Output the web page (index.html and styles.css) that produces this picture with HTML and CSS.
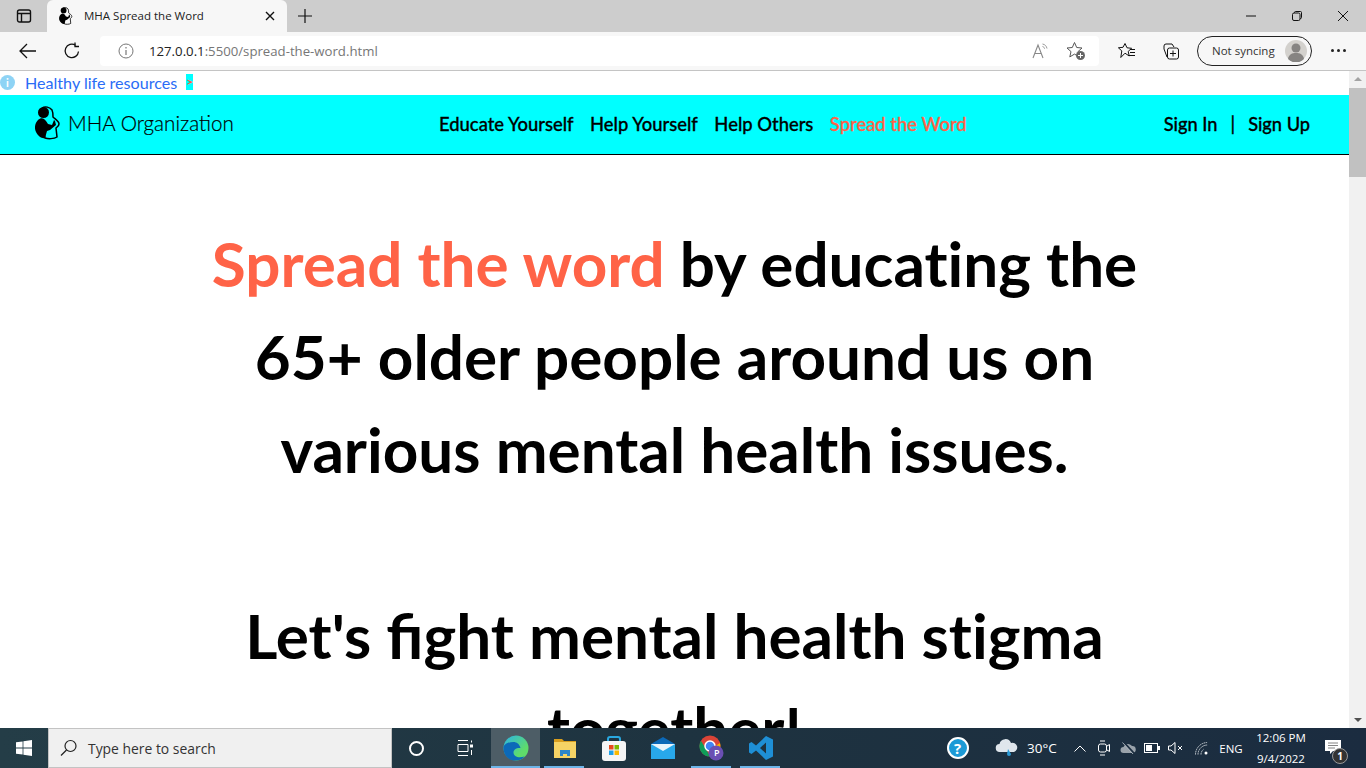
FILE: index.html
```html
<!DOCTYPE html>
<html lang="en">

<head>
    <meta charset="UTF-8">
    <title>MHA Spread the Word</title>
    <link rel="stylesheet" href="styles.css">
</head>

<body>
    <svg class="defs" width="0" height="0">
        <symbol id="hug" viewBox="0 0 26 34">
            <path d="M7 2c3-2 8-1 10 2 1 2 1 4 1 7 2 2 6 4 6 7 0 2-2 3-3 4l1 9c-3 2-9 2-12 1l-1-6" fill="none" stroke="#000" stroke-width="1.500" />
            <circle cx="8.500" cy="6.500" r="5.500" fill="#000" />
            <path d="M3 14c3-3 6-2 8 1l2 3 4 1 2-5 1 1 1 4-6 5-3 1-2 7c-3 1-7-2-9-6-2-4-1-9 2-12z" fill="#000" />
        </symbol>
    </svg>

    <!-- browser frame -->
    <div class="tabstrip">
        <svg class="sidebar-ico" width="16" height="16" viewBox="0 0 16 16"><rect x="1.500" y="2" width="13" height="12" rx="2" fill="none" stroke="#111" stroke-width="1.400" /><path d="M1.500 5.500h13M5.500 5.500V14" stroke="#111" stroke-width="1.400" /></svg>
        <div class="tab">
            <svg class="tab-fav" width="14" height="18"><use href="#hug" /></svg>
            <span class="tab-title">MHA Spread the Word</span>
            <svg class="tab-close" width="10" height="10" viewBox="0 0 10 10"><path d="M1 1l8 8M9 1l-8 8" stroke="#111" stroke-width="1.400" /></svg>
        </div>
        <svg class="new-tab" width="14" height="14" viewBox="0 0 14 14"><path d="M7 0v14M0 7h14" stroke="#111" stroke-width="1.200" /></svg>
        <div class="win-btns">
            <svg width="12" height="12" viewBox="0 0 12 12"><path d="M1 6h10" stroke="#111" /></svg>
            <svg width="12" height="12" viewBox="0 0 12 12"><rect x="1.500" y="3" width="7.500" height="7.500" rx="1.500" fill="none" stroke="#111" /><path d="M3.500 3V2.500a1 1 0 0 1 1-1h5a1 1 0 0 1 1 1v5a1 1 0 0 1-1 1H9" fill="none" stroke="#111" /></svg>
            <svg width="12" height="12" viewBox="0 0 12 12"><path d="M1 1l10 10M11 1L1 11" stroke="#111" /></svg>
        </div>
    </div>

    <div class="toolbar">
        <svg class="tool-back" width="18" height="16" viewBox="0 0 18 16"><path d="M17 8H1M8 1L1 8l7 7" fill="none" stroke="#111" stroke-width="1.300" /></svg>
        <svg class="tool-reload" width="18" height="18" viewBox="0 0 18 18"><path d="M15.500 9.500A6.700 6.700 0 1 1 12.500 3.300" fill="none" stroke="#111" stroke-width="1.300" /><path d="M12 0.500v4h4" fill="none" stroke="#111" stroke-width="1.300" /></svg>
        <div class="address">
            <svg class="addr-info" width="16" height="16" viewBox="0 0 16 16"><circle cx="8" cy="8" r="7" fill="none" stroke="#777" /><path d="M8 7v5M8 4v1.500" stroke="#777" stroke-width="1.200" /></svg>
            <span class="url"><b>127.0.0.1</b>:5500/spread-the-word.html</span>
            <svg class="addr-read" width="18" height="16" viewBox="0 0 18 16"><path d="M1 15L6 2l5 13M3 10.500h6" fill="none" stroke="#888" stroke-width="1.100" /><path d="M10.500 1c2.500.5 4 2 4.500 4.500M10.500 3.500c1.200.3 1.800 1 2.100 2.200" fill="none" stroke="#999" /></svg>
            <svg class="addr-star" width="20" height="20" viewBox="0 0 20 20"><path d="M8.500 1.500l2.200 5 5.300.5-4 3.600 1.200 5.300-4.700-2.800-4.700 2.800 1.200-5.300-4-3.600 5.300-.5z" fill="none" stroke="#555" /><circle cx="14.500" cy="14.500" r="4.500" fill="#666" /><path d="M14.500 12v5M12 14.500h5" stroke="#fff" /></svg>
        </div>
        <svg class="tool-fav" width="18" height="18" viewBox="0 0 18 18"><path d="M7 1.500l2 4.300 4.600.5-3.400 3.100 1 4.600L7 11.200 2.800 15.500l1-6.600L.4 5.800l4.600-.5z" fill="none" stroke="#111" /><path d="M12 7.500h5M12 10.500h5M11 13.500h6" stroke="#111" /></svg>
        <svg class="tool-coll" width="18" height="18" viewBox="0 0 18 18"><path d="M5 15L2 7V4a2 2 0 0 1 2-2h6l2 3" fill="none" stroke="#111" /><rect x="5.500" y="6" width="11" height="11" rx="2" fill="#f7f7f7" stroke="#111" /><path d="M11 8.500v6M8 11.500h6" stroke="#111" /></svg>
        <div class="sync">
            <span>Not syncing</span>
            <svg class="avatar" width="22" height="22" viewBox="0 0 22 22"><circle cx="11" cy="11" r="11" fill="#d3d1cd" /><circle cx="11" cy="8" r="4.500" fill="#868482" /><path d="M3 19c1-5 4-6 8-6s7 1 8 6a11 11 0 0 1-16 0z" fill="#868482" /></svg>
        </div>
        <div class="tool-more"><i></i><i></i><i></i></div>
    </div>

    <div class="viewport">
        <div class="page">
            <a class="notice" href="#">
                <span class="notice-ico">i</span>
                <span class="notice-txt">Healthy life resources</span>
                <span class="notice-arrow">&gt;</span>
            </a>
            <nav class="navbar">
                <div class="brand">
                    <svg width="26" height="34"><use href="#hug" /></svg>
                    <span>MHA Organization</span>
                </div>
                <ul class="nav-links">
                    <li>Educate Yourself</li>
                    <li>Help Yourself</li>
                    <li>Help Others</li>
                    <li class="active">Spread the Word</li>
                </ul>
                <div class="auth">
                    <span>Sign In</span>
                    <span class="sep">|</span>
                    <span>Sign Up</span>
                </div>
            </nav>
            <h1 class="headline"><span class="accent">Spread the word</span> by educating the 65+ older people around us on various mental health issues.<br><br>Let's <span class="lig">fi</span>ght mental health stigma together!</h1>
        </div>
        <div class="scrollbar">
            <span class="arrow-up"></span>
            <div class="track"><div class="thumb"></div></div>
            <span class="arrow-down"></span>
        </div>
    </div>

    <!-- windows taskbar -->
    <div class="taskbar">
        <div class="start">
            <svg width="16" height="16" viewBox="0 0 16 16"><path d="M0 2.300l6.600-.9v6.200H0zM7.400 1.300L16 0v7.600H7.400zM0 8.400h6.600v6.200L0 13.700zM7.400 8.400H16V16l-8.600-1.300z" fill="#fff" /></svg>
        </div>
        <div class="search">
            <svg width="18" height="18" viewBox="0 0 18 18"><circle cx="10.500" cy="7" r="5.500" fill="none" stroke="#222" stroke-width="1.200" /><path d="M6.500 11L1 16.500" stroke="#222" stroke-width="1.200" /></svg>
            <span>Type here to search</span>
        </div>
        <div class="task-btn cortana"><i class="ring"></i></div>
        <div class="task-btn taskview">
            <svg width="17" height="16" viewBox="0 0 17 16"><path d="M1 .5h10M1 15.500h10M1 4.500h10v7H1z" fill="none" stroke="#fff" /><rect x="13" y="4.500" width="3" height="3" fill="#fff" /><path d="M14.500 .5v2M14.500 10v5" stroke="#fff" /></svg>
        </div>
        <div class="task-btn current">
            <svg width="26" height="26" viewBox="0 0 26 26"><defs><linearGradient id="eg" x1="0" y1="0" x2="1" y2="1"><stop offset="0" stop-color="#2bb4e8" /><stop offset=".7" stop-color="#5fdc6a" /></linearGradient></defs><circle cx="13" cy="13" r="12.500" fill="url(#eg)" /><path d="M.5 13c0 8 6 12.500 12 12.500 4 0 7-1.500 9-4-6 2-11 0-11-4 0-3 3-5 7-4.500-1-4-4-6-7-6-5 0-10 2-10 6z" fill="#0c69b8" /></svg>
        </div>
        <div class="task-btn running">
            <svg width="22" height="20" viewBox="0 0 22 20"><path d="M0 1h8l2 2h12v3H0z" fill="#d99e1e" /><rect y="4" width="22" height="16" fill="#f6d365" /><path d="M6 12h10v6h-3v-2H9v2H6z" fill="#2d86c9" /></svg>
        </div>
        <div class="task-btn">
            <svg width="24" height="25" viewBox="0 0 24 25"><path d="M6 7V3a2 2 0 0 1 2-2h8a2 2 0 0 1 2 2v4" fill="none" stroke="#29a8e0" stroke-width="2" /><rect y="5" width="24" height="20" rx="3" fill="#f5f5f5" /><rect x="7" y="9" width="4.500" height="4.500" fill="#e8491d" /><rect x="12.500" y="9" width="4.500" height="4.500" fill="#7db900" /><rect x="7" y="14.500" width="4.500" height="4.500" fill="#1ea1e8" /><rect x="12.500" y="14.500" width="4.500" height="4.500" fill="#fbb900" /></svg>
        </div>
        <div class="task-btn">
            <svg width="24" height="22" viewBox="0 0 24 22"><path d="M12 0l12 7H0z" fill="#0c69b8" /><rect y="7" width="24" height="15" fill="#28a8ea" /><path d="M0 7h24L12 14z" fill="#e8f4fc" /></svg>
        </div>
        <div class="task-btn running">
            <svg width="26" height="26" viewBox="0 0 26 26"><circle cx="11" cy="11" r="10.500" fill="#db4437" /><path d="M11 21.500A10.500 10.500 0 0 1 1.900 5.700L7 14l4 7.500z" fill="#0f9d58" /><path d="M21 8a10.500 10.500 0 0 1-10 13.500L15 12z" fill="#f4b400" /><circle cx="11" cy="11" r="5" fill="#4285f4" stroke="#fff" stroke-width="1.500" /><circle cx="17" cy="18" r="7.500" fill="#6a4fb3" /></svg>
            <span class="profile-p">P</span>
        </div>
        <div class="task-btn running">
            <svg width="24" height="24" viewBox="0 0 24 24"><path d="M17 0l7 3.500v17L17 24 7 14.500 2.500 18 0 16.500V7.500L2.500 6 7 9.500zM17 6.500L11 12l6 5.500z" fill="#1e8fd6" /></svg>
        </div>

        <div class="tray">
            <div class="tray-help"><span>?</span></div>
            <div class="tray-weather">
                <svg width="24" height="20" viewBox="0 0 24 20"><path d="M5 14a4 4 0 0 1-.5-8A6 6 0 0 1 16 5a4.500 4.500 0 0 1 3 9z" fill="#dfe6ec" /><path d="M13 11l3 5a2 2 0 1 1-4 0z" fill="#2a9ad6" /></svg>
                <span>30°C</span>
            </div>
            <div class="tray-ico w-chev"><svg width="12" height="7" viewBox="0 0 12 7"><path d="M.5 6.500L6 1l5.500 5.500" fill="none" stroke="#fff" /></svg></div>
            <div class="tray-ico"><svg width="12" height="16" viewBox="0 0 12 16"><rect x=".5" y="4" width="8" height="8" rx="2" fill="none" stroke="#fff" /><path d="M9 6l2.500-1.500v7L9 10M2 1h5M2 15h5" fill="none" stroke="#fff" /></svg></div>
            <div class="tray-ico"><svg width="16" height="12" viewBox="0 0 16 12"><path d="M3.500 11a3 3 0 0 1 0-6A5 5 0 0 1 12 4a3.500 3.500 0 0 1 .5 7z" fill="#9aa3ab" /><path d="M3.500 0l11 12" stroke="#1c2e40" stroke-width="2" /><path d="M2.500 0.500l11 12" stroke="#c8ced4" stroke-width=".8" /></svg></div>
            <div class="tray-ico"><svg width="16" height="10" viewBox="0 0 16 10"><rect x=".5" y=".5" width="13" height="9" fill="none" stroke="#fff" /><rect x="2" y="2" width="6" height="6" fill="#fff" /><rect x="14" y="3" width="2" height="4" fill="#fff" /></svg></div>
            <div class="tray-ico"><svg width="16" height="12" viewBox="0 0 16 12"><path d="M.5 4h2.500L7 .5v11L3 8H.5z" fill="none" stroke="#fff" /><path d="M10 4l4 4M14 4l-4 4" stroke="#fff" /></svg></div>
            <div class="tray-ico w-wifi"><svg width="14" height="13" viewBox="0 0 14 13"><path d="M.5 12.500A12 12 0 0 1 12.500 .5M3 12.500A9.500 9.500 0 0 1 12.500 3M6 12.500A6.500 6.500 0 0 1 9 7" fill="none" stroke="#c8ced4" stroke-dasharray="1.500 .6" /><circle cx="11" cy="11" r="1.500" fill="#fff" /></svg></div>
            <div class="tray-lang">ENG</div>
            <div class="tray-clock"><span>12:06 PM</span><span>9/4/2022</span></div>
            <div class="tray-notify">
                <svg width="16" height="14" viewBox="0 0 16 14"><path d="M0 0h16v11H8l-3 3v-3H0z" fill="#fff" /><path d="M3 3h10M3 5.500h10M3 8h7" stroke="#666" stroke-width=".8" /></svg>
                <span class="notify-badge">1</span>
            </div>
        </div>
    </div>
</body>

</html>
```

FILE: styles.css
```css
* {
    box-sizing: border-box;
}

html, body {
    height: 100%;
}

body {
    margin: 0;
    display: flex;
    flex-direction: column;
    overflow: hidden;
    font-family: "Open Sans", "Noto Sans", sans-serif;
    background-color: #fff;
}

.defs {
    display: block;
    height: 0;
}

svg {
    display: block;
    flex: none;
}

/* tab strip */
.tabstrip {
    height: 32px;
    flex: none;
    display: flex;
    align-items: center;
    background-color: #cdcdcd;
}

.sidebar-ico {
    margin-left: 16px;
}

.tab {
    width: 240px;
    height: 32px;
    margin-left: 15px;
    padding-left: 12px;
    display: flex;
    align-items: center;
    background-color: #f7f7f7;
    border-radius: 6px 6px 0 0;
}

.tab-title {
    margin-left: 11px;
    padding-bottom: 2px;
    font-size: 11.5px;
    color: #222;
}

.tab-close {
    margin-left: auto;
    margin-right: 12px;
}

.new-tab {
    margin-left: 11px;
}

.win-btns {
    margin-left: auto;
    display: flex;
    gap: 34px;
    padding-right: 17px;
}

/* toolbar */
.toolbar {
    height: 39px;
    flex: none;
    display: flex;
    align-items: center;
    background-color: #f7f7f7;
    border-bottom: 1px solid #c4c4c4;
    padding-bottom: 1px;
}

.tool-back {
    margin-left: 19px;
}

.tool-reload {
    margin-left: 26px;
}

.address {
    width: 999px;
    height: 30px;
    margin-left: 19px;
    display: flex;
    align-items: center;
    background-color: #fff;
    border-radius: 4px;
}

.addr-info {
    margin-left: 18px;
}

.url {
    margin-left: 15px;
    font-size: 13.2px;
    color: #767676;
}

.url b {
    font-weight: 400;
    color: #222;
}

.addr-read {
    margin-left: auto;
}

.addr-star {
    margin-left: 16px;
    margin-right: 13px;
}

.tool-fav {
    margin-left: 19px;
}

.tool-coll {
    margin-left: 26px;
}

.sync {
    width: 115px;
    height: 30px;
    margin-left: 17px;
    padding: 0 4px 0 14px;
    display: flex;
    align-items: center;
    justify-content: space-between;
    border: 1px solid #222;
    border-radius: 15px;
    font-size: 11.5px;
    color: #333;
}

.tool-more {
    margin-left: 19px;
    display: flex;
    gap: 3px;
}

.tool-more i {
    width: 3px;
    height: 3px;
    border-radius: 50%;
    background-color: #222;
}

/* page area */
.viewport {
    flex: 1;
    min-height: 0;
    display: flex;
}

.page {
    flex: 1;
    min-width: 0;
    overflow: hidden;
    font-family: Lato, sans-serif;
}

.notice {
    height: 24px;
    padding-bottom: 2px;
    display: flex;
    align-items: center;
    text-decoration: none;
}

.notice-ico {
    width: 15px;
    height: 15px;
    display: flex;
    align-items: center;
    justify-content: center;
    border-radius: 50%;
    background-color: #8ed3f5;
    color: #fff;
    font-size: 11px;
    font-weight: 700;
}

.notice-txt {
    margin-left: 10px;
    font-size: 16.1px;
    color: #2a6cf6;
}

.notice-arrow {
    width: 7px;
    height: 16px;
    margin-left: 9px;
    background-color: #0ff;
    color: #ff6347;
    font-size: 12px;
    font-weight: 700;
    line-height: 16px;
    text-align: center;
}

.navbar {
    height: 60px;
    padding: 0 39px 1px 35px;
    display: flex;
    align-items: center;
    background-color: #0ff;
    border-bottom: 1px solid #000;
    font-size: 18.4px;
    font-weight: 500;
    color: #000;
}

.brand {
    width: 404px;
    padding-bottom: 2px;
    display: flex;
    align-items: center;
    gap: 7px;
    font-size: 20.6px;
    font-weight: 300;
    -webkit-text-stroke: 0.2px currentColor;
}

.nav-links {
    margin: 0;
    padding: 0;
    list-style-type: none;
    display: flex;
    gap: 16.5px;
    -webkit-text-stroke: 0.3px currentColor;
}

.active {
    color: #ff6347;
}

.auth {
    margin-left: auto;
    display: flex;
    gap: 13px;
    font-size: 18.2px;
    -webkit-text-stroke: 0.3px currentColor;
}

.headline {
    width: 1000px;
    margin: 62px auto 0;
    text-align: center;
    font-size: 62px;
    font-weight: 700;
    line-height: 93px;
    color: #000;
    font-variant-ligatures: none;
}

.lig {
    font-variant-ligatures: common-ligatures;
}

.accent {
    color: #ff6347;
}

/* scrollbar */
.scrollbar {
    width: 17px;
    flex: none;
    display: flex;
    flex-direction: column;
    align-items: center;
    background-color: #f1f1f1;
}

.arrow-up, .arrow-down {
    width: 0;
    height: 0;
    flex: none;
    margin: 6px 0;
    border-left: 4px solid transparent;
    border-right: 4px solid transparent;
}

.arrow-up {
    border-bottom: 4px solid #a3a3a3;
}

.arrow-down {
    border-top: 4px solid #505050;
}

.track {
    flex: 1;
    width: 100%;
    padding-top: 1px;
}

.thumb {
    width: 100%;
    height: 89px;
    background-color: #c1c1c1;
}

/* taskbar */
.taskbar {
    height: 40px;
    flex: none;
    display: flex;
    align-items: stretch;
    background: linear-gradient(90deg, #243d47, #1e3340 50%, #1b2c40);
    color: #fff;
}

.start {
    width: 48px;
    display: flex;
    align-items: center;
    justify-content: center;
}

.search {
    width: 344px;
    display: flex;
    align-items: center;
    padding-left: 11px;
    gap: 10px;
    background-color: #f0f0f0;
    border: 1px solid #c3c3c3;
    font-size: 13.9px;
    color: #333;
}

.task-btn {
    width: 49px;
    display: flex;
    align-items: center;
    justify-content: center;
    position: relative;
}

.running::after, .current::after {
    content: "";
    position: absolute;
    bottom: 0;
    height: 2px;
    background-color: #6cb4e8;
}

.running::after {
    left: 4px;
    right: 5px;
}

.current {
    background-color: #4d5d66;
}

.current::after {
    left: 0;
    right: 0;
}

.cortana {
    width: 48px;
}

.taskview {
    width: 51px;
}

.ring {
    width: 15px;
    height: 15px;
    border: 2px solid #fff;
    border-radius: 50%;
}

.profile-p {
    position: absolute;
    left: 27px;
    top: 18px;
    font-size: 9px;
    font-weight: 600;
    color: #fff;
}

.tray {
    margin-left: auto;
    display: flex;
    align-items: center;
}

.tray-help {
    width: 36px;
    padding-left: 1px;
    display: flex;
    justify-content: center;
}

.tray-help span {
    width: 22px;
    height: 22px;
    border-radius: 50%;
    border: 2px solid #fff;
    background-color: #1b9ad6;
    font-size: 15px;
    font-weight: 700;
    line-height: 18px;
    text-align: center;
}

.tray-weather {
    width: 92px;
    padding-left: 20px;
    display: flex;
    align-items: center;
    gap: 8px;
    font-size: 13.5px;
}

.tray-ico {
    width: 24px;
    display: flex;
    justify-content: center;
}

.w-chev {
    margin-left: 1px;
}

.w-wifi {
    width: 28px;
}

.tray-lang {
    width: 30px;
    font-size: 11.5px;
    text-align: center;
}

.tray-clock {
    width: 70px;
    display: flex;
    flex-direction: column;
    align-items: center;
    gap: 6px;
    font-size: 11.5px;
    line-height: 15px;
    padding-bottom: 1px;
}

.tray-notify {
    width: 50px;
    margin-top: -2px;
    padding-left: 9px;
    position: relative;
}

.notify-badge {
    position: absolute;
    left: 16px;
    top: 8px;
    width: 16px;
    height: 16px;
    border-radius: 50%;
    border: 1px solid #999;
    background-color: #333;
    font-size: 10px;
    font-weight: 700;
    line-height: 14px;
    text-align: center;
}
```
